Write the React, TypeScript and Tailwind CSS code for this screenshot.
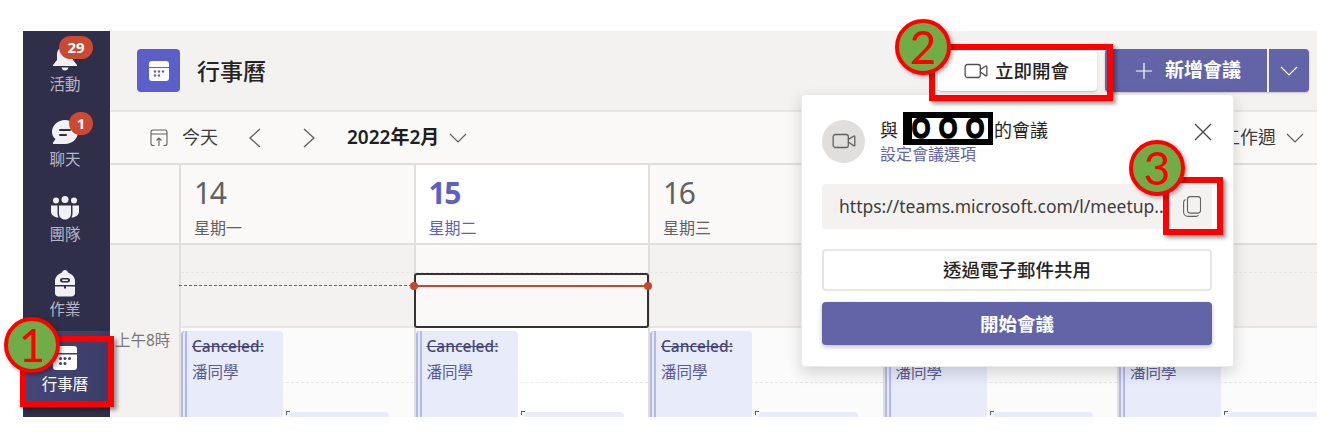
import React from 'react'
import { Plus, Video } from 'lucide-react'

const font = { fontFamily: '"Noto Sans", "Noto Sans CJK TC", sans-serif' }

function Badge({ n, className }: { n: string; className: string }) {
    return (
        <span className={`absolute flex items-center justify-center rounded-full bg-[#cc4a31] text-white font-bold text-[15px] leading-none ${className}`}>{n}</span>
    )
}

function NavItem({ label, active, children }: { label: string; active?: boolean; children: React.ReactNode }) {
    return (
        <div className={`relative flex flex-col items-center h-[75px] w-full pr-[3px] ${active ? 'bg-gradient-to-r from-[#46477a] to-[#3b3c66] text-white' : 'text-[#b5b5c5]'}`}>
            <div className="h-[42px] w-full flex items-center justify-center pt-[12px]">{children}</div>
            <span className="text-[15.5px] leading-[22px]">{label}</span>
        </div>
    )
}

function Sidebar() {
    return (
        <nav className="w-[87px] shrink-0 bg-[#2f2f4a] flex flex-col">
            <NavItem label="活動">
                <svg width="26" height="26" viewBox="0 0 26 26" fill="#f1f1f5">
                    <path d="M13 1c5 0 8 4 8 9v5l4 5v1H1v-1l4-5v-5c0-5 3-9 8-9z" />
                    <path d="M9.500 22.500h7c-.4 2-1.800 3-3.500 3s-3.100-1-3.500-3z" />
                </svg>
                <Badge n="29" className="left-[36px] top-[5px] w-[34px] h-[23px]" />
            </NavItem>
            <NavItem label="聊天">
                <svg width="28" height="28" viewBox="0 0 28 28" fill="#f1f1f5">
                    <path d="M14 1c7 0 13 5 13 12s-6 12-13 12H3c-1 0-1.500-1-1-1.600L4.500 20C2 18 1 15.500 1 13 1 6 7 1 14 1z" />
                    <rect x="8" y="10" width="12" height="2" rx="1" fill="#2f2f4a" />
                    <rect x="8" y="15" width="8" height="2" rx="1" fill="#2f2f4a" />
                </svg>
                <Badge n="1" className="left-[46px] top-[6px] w-[24px] h-[23px]" />
            </NavItem>
            <NavItem label="團隊">
                <svg width="28" height="24" viewBox="0 0 28 24" fill="#f1f1f5">
                    <circle cx="14" cy="3.500" r="3.500" />
                    <circle cx="5" cy="4.500" r="3" />
                    <circle cx="23" cy="4.500" r="3" />
                    <path d="M8 9.500h12v8c0 3.500-2.500 6-6 6s-6-2.500-6-6z" />
                    <path d="M0 9.500h6.500v8c0 1.500.3 2.800 1 4-4 0-7.500-2.500-7.500-6z" />
                    <path d="M28 9.500h-6.500v8c0 1.500-.3 2.800-1 4 4 0 7.500-2.500 7.500-6z" />
                </svg>
            </NavItem>
            <NavItem label="作業">
                <svg width="22" height="27" viewBox="0 0 22 27" fill="#f1f1f5">
                    <path d="M11 0c1.500 0 2.500 1 3 2.500C18 4 21 7 21 11v4H1v-4c0-4 3-7 7-8.500C8.500 1 9.500 0 11 0z" />
                    <rect x="6" y="8" width="10" height="4.500" rx="2.200" fill="#2f2f4a" />
                    <rect x="8" y="9.500" width="6" height="1.500" rx=".7" fill="#f1f1f5" />
                    <path d="M1 16.500h9v2h2v-2h9V23c0 2-1.500 3.500-3.500 3.500h-13C2.500 26.500 1 25 1 23z" />
                </svg>
            </NavItem>
            <NavItem label="行事曆" active>
                <svg width="24" height="24" viewBox="0 0 24 24" fill="#ffffff">
                    <path d="M3 0h18a3 3 0 0 1 3 3v4H0V3a3 3 0 0 1 3-3z" />
                    <path d="M0 8.500h24V21a3 3 0 0 1-3 3H3a3 3 0 0 1-3-3z" />
                    <g fill="#3f4070">
                        <circle cx="7.500" cy="12.500" r="1.500" />
                        <circle cx="12" cy="12.500" r="1.500" />
                        <circle cx="16.500" cy="12.500" r="1.500" />
                        <circle cx="7.500" cy="17.500" r="1.500" />
                        <circle cx="12" cy="17.500" r="1.500" />
                    </g>
                </svg>
            </NavItem>
        </nav>
    )
}

function Caret({ className }: { className: string }) {
    return (
        <svg width="18" height="10" viewBox="0 0 18 10" fill="none" stroke="currentColor" strokeWidth="1.200" className={className}>
            <path d="M1 1l8 8 8-8" />
        </svg>
    )
}

function Header() {
    return (
        <header className="h-[81px] shrink-0 bg-[#f3f2f1] border-b-2 border-[#e8e6e4] flex items-center pl-[27px] pr-[8px]">
            <div className="w-[43px] h-[43px] rounded-[4px] bg-[#5b5fc7] flex items-center justify-center">
                <svg width="20" height="20" viewBox="0 0 20 20" fill="#ffffff">
                    <path d="M3 0h14a3 3 0 0 1 3 3v3H0V3a3 3 0 0 1 3-3z" />
                    <path d="M0 7h20v10a3 3 0 0 1-3 3H3a3 3 0 0 1-3-3z" />
                    <g fill="#5b5fc7">
                        <circle cx="6" cy="10.500" r="1.200" />
                        <circle cx="10" cy="10.500" r="1.200" />
                        <circle cx="14" cy="10.500" r="1.200" />
                        <circle cx="6" cy="14.500" r="1.200" />
                        <circle cx="10" cy="14.500" r="1.200" />
                    </g>
                </svg>
            </div>
            <h1 className="ml-[17px] pt-[1px] text-[23px] text-[#252423] font-medium">行事曆</h1>
            <div className="ml-auto flex items-center gap-[8px]">
                <button className="h-[40px] w-[159px] bg-white rounded-[4px] shadow-[0_1px_2px_rgba(0,0,0,0.2)] flex items-center justify-center gap-[6px] pr-[3px] text-[18.5px] text-[#252423] font-medium">
                    <Video size={26} strokeWidth={1.2} className="text-[#505050]" />
                    立即開會
                </button>
                <div className="h-[43px] flex rounded-[4px] bg-[#6264a7] text-white shadow-[0_1px_2px_rgba(0,0,0,0.2)]">
                    <div className="w-[162px] flex items-center justify-center gap-[8px] text-[19px] font-bold">
                        <Plus size={26} strokeWidth={1.1} />
                        新增會議
                    </div>
                    <div className="w-[42px] border-l-2 border-[#f3f2f1] flex items-center justify-center">
                        <Caret className="" />
                    </div>
                </div>
            </div>
        </header>
    )
}

function Toolbar() {
    return (
        <div className="h-[53px] shrink-0 bg-[#faf9f8] border-b-2 border-[#e1dfdd] flex items-center pl-[40px] pr-[13px] text-[#3d3c3b]">
            <svg width="18" height="18" viewBox="0 0 18 18" fill="none" stroke="#616161" strokeWidth="1.100">
                <path d="M4.500 16.500H3A2 2 0 0 1 1 14.500V3A2 2 0 0 1 3 1h12a2 2 0 0 1 2 2v11.500a2 2 0 0 1-2 2h-1.500" />
                <path d="M1 5h16M9 17V9M6.500 11.500L9 9l2.500 2.500" />
            </svg>
            <span className="ml-[14px] text-[18px]">今天</span>
            <svg width="13" height="20" viewBox="0 0 13 20" fill="none" stroke="#605e5c" strokeWidth="1.300" className="ml-[30px]">
                <path d="M12 1L2 10l10 9" />
            </svg>
            <svg width="13" height="20" viewBox="0 0 13 20" fill="none" stroke="#605e5c" strokeWidth="1.300" className="ml-[42px]">
                <path d="M1 1l10 9-10 9" />
            </svg>
            <span className="ml-[31px] text-[19px] font-semibold text-[#201f1e]">2022年2月</span>
            <Caret className="ml-[10px] text-[#605e5c]" />
            <span className="ml-auto text-[18px]">工作週</span>
            <Caret className="ml-[10px] text-[#605e5c]" />
        </div>
    )
}

function DayColumn({ day, week, today }: { day: string; week: string; today?: boolean }) {
    return (
        <div className="flex flex-col border-l-2 border-[#e1dfdd] min-w-0">
            <div className={`h-[80px] shrink-0 border-b-2 border-[#e1dfdd] pl-[13px] pt-[8px] ${today ? 'bg-white text-[#5b5fc7]' : 'bg-[#faf9f8] text-[#616161]'}`}>
                <div className={`text-[30px] leading-[40px] tracking-[-1.500px] ${today ? 'font-bold' : ''}`}>{day}</div>
                <div className="mt-[4px] text-[16px] leading-[22px]">{week}</div>
            </div>
            <div className={`h-[83px] shrink-0 border-b-2 border-[#e8e6e4] ${today ? 'bg-[#faf9f8]' : 'bg-[#f3f2f1]'}`}>
                <div className="h-[28px] border-b border-dashed border-[#e8e6e4]" />
            </div>
            <div className={`relative flex-1 ${today ? 'bg-white' : 'bg-[#fcfbfb]'}`}>
                <div className="absolute left-0 right-0 top-[54px] border-b border-dashed border-[#e8e6e4]" />
                <div className="relative flex">
                    <div className="mt-[3px] w-[102px] h-[100px] shrink-0 rounded-[4px] bg-[#e8ebfa] border-l-[6px] border-double border-[#b4b8f2] pl-[5px] pt-[2px] text-[15.5px] leading-[26px]">
                        <div className="text-[#464775] line-through font-medium">Canceled:</div>
                        <div className="text-[#585a96]">潘同學</div>
                    </div>
                    <div className="relative ml-[6px] mt-[84px] w-[100px] h-[20px] shrink-0 rounded-[4px] bg-[#e8ebfa]">
                        <span className="absolute -left-[3px] -top-[1px] w-[4px] h-[4px] border-l border-t border-[#4f52b2]" />
                    </div>
                </div>
            </div>
        </div>
    )
}

function WeekGrid() {
    return (
        <div className="relative flex-1 min-h-0 grid grid-cols-[69px_234.500px_234.500px_234.500px_234.500px_234.500px]">
            <div className="bg-[#f3f2f1] flex flex-col">
                <div className="h-[80px] shrink-0 bg-[#faf9f8] border-b-2 border-[#e1dfdd]" />
                <div className="h-[83px] shrink-0" />
                <div className="flex-1 pl-[5px] pt-[1px] text-[15.5px] text-[#7a7876] leading-[22px]">上午8時</div>
            </div>
            <DayColumn day="14" week="星期一" />
            <DayColumn day="15" week="星期二" today />
            <DayColumn day="16" week="星期三" />
            <DayColumn day="17" week="星期四" />
            <DayColumn day="18" week="星期五" />
            {/* current time */}
            <div className="absolute left-[69px] w-[235px] top-[120px] h-[1px] bg-[repeating-linear-gradient(90deg,#d13b20_0px,#d13b20_3px,transparent_3px,transparent_5px)]" />
            <div className="absolute left-[304px] w-[235px] top-[108px] h-[55px] rounded-[3px] border-2 border-[#333333] bg-[#faf9f8]" />
            <div className="absolute left-[304px] w-[234px] top-[120px] h-[2px] bg-[#c4492c]" />
            <div className="absolute left-[300px] top-[117px] w-[8px] h-[8px] rounded-full bg-[#c4492c]" />
            <div className="absolute left-[534px] top-[117px] w-[8px] h-[8px] rounded-full bg-[#c4492c]" />
        </div>
    )
}

function Popup() {
    return (
        <div className="absolute left-[801px] top-[94px] w-[433px] h-[273px] bg-white rounded-[4px] border border-[#ebebeb] shadow-[0_6px_16px_rgba(0,0,0,0.16)] pl-[20px] pr-[21px] pt-[24px]">
            <div className="flex items-center h-[44px]">
                <div className="w-[43px] h-[43px] rounded-full bg-[#e1dfdd] flex items-center justify-center shrink-0">
                    <Video size={26} strokeWidth={1.2} className="text-[#616161]" />
                </div>
                <div className="ml-[15px]">
                    <div className="flex items-center h-[25px] text-[18px] text-[#252423]">
                        與
                        <span className="ml-[5px] mr-[1px] -mt-[4px] h-[33px] w-[90px] shrink-0 bg-white border-black border-l-[9px] border-r-[5px] border-y-[6px] flex items-center gap-[9px] text-[30px] leading-none font-bold text-black [-webkit-text-stroke:1.500px_black]" style={{ fontFamily: '"Liberation Sans", sans-serif' }}>
                            <span className="w-[18px] flex justify-center scale-x-[0.8]">O</span>
                            <span className="w-[18px] flex justify-center scale-x-[0.8]">O</span>
                            <span className="w-[18px] flex justify-center scale-x-[0.8]">O</span>
                        </span>
                        的會議
                    </div>
                    <div className="text-[16px] leading-[22px] text-[#6264a7]">設定會議選項</div>
                </div>
                <svg width="18" height="18" viewBox="0 0 18 18" fill="none" stroke="#484644" strokeWidth="1.300" className="ml-auto mb-[19px]">
                    <path d="M1 1l16 16M17 1L1 17" />
                </svg>
            </div>
            <div className="mt-[21px] h-[45px] rounded-[4px] bg-[#f3f2f1] flex items-center pl-[17px] pr-[11px] text-[17.5px] text-[#3d3c3b]">
                <span className="whitespace-nowrap">https://teams.microsoft.com/l/meetup..</span>
                <svg width="18" height="21" viewBox="0 0 18 21" fill="none" stroke="#616161" strokeWidth="1.100" className="ml-auto">
                    <rect x="4.500" y="0.600" width="13" height="16.500" rx="2.500" />
                    <path d="M2.500 3.500C1.300 4 .6 5 .6 6.200V16c0 2.500 2 4.400 4.400 4.400h8c1 0 2-.7 2.400-1.500" />
                </svg>
            </div>
            <button className="mt-[20px] w-full h-[42px] rounded-[4px] bg-white border-2 border-[#e8e6e4] text-[18.5px] text-[#252423] font-medium flex items-center justify-center">透過電子郵件共用</button>
            <button className="mt-[11px] w-full h-[43px] rounded-[4px] bg-[#6264a7] text-white text-[18.5px] font-bold shadow-[0_2px_4px_rgba(0,0,0,0.25)] flex items-center justify-center">開始會議</button>
        </div>
    )
}

function Marker({ n, className }: { n: string; className: string }) {
    return (
        <div className={`absolute w-[56px] h-[56px] rounded-full bg-[#70ad47] border-[4px] border-[#ff0000] shadow-[2px_2px_4px_rgba(0,0,0,0.35)] flex items-center justify-center text-[#ff0000] text-[46px] leading-none ${className}`} style={{ fontFamily: 'Lato, sans-serif' }}>
            {n}
        </div>
    )
}

export default function App() {
    return (
        <div className="relative w-[1333px] h-[443px] bg-white overflow-hidden pl-[23px] pt-[31px]" style={font}>
            <div className="w-[1294px] h-[386px] flex overflow-hidden">
                <Sidebar />
                <main className="flex-1 min-w-0 flex flex-col">
                    <Header />
                    <Toolbar />
                    <WeekGrid />
                </main>
            </div>
            <Popup />
            {/* callouts */}
            <div className="absolute left-[20px] top-[336px] w-[94px] h-[71px] border-[6px] border-[#ff0000] shadow-[3px_3px_4px_rgba(0,0,0,0.4)]" />
            <div className="absolute left-[929px] top-[44px] w-[184px] h-[57px] border-[6px] border-[#ff0000] shadow-[3px_3px_4px_rgba(0,0,0,0.4)]" />
            <div className="absolute left-[1163px] top-[177px] w-[60px] h-[58px] border-[6px] border-[#ff0000] shadow-[3px_3px_4px_rgba(0,0,0,0.4)]" />
            <Marker n="1" className="left-[4px] top-[317px]" />
            <Marker n="2" className="left-[895px] top-[19px]" />
            <Marker n="3" className="left-[1129px] top-[140px]" />
        </div>
    )
}
